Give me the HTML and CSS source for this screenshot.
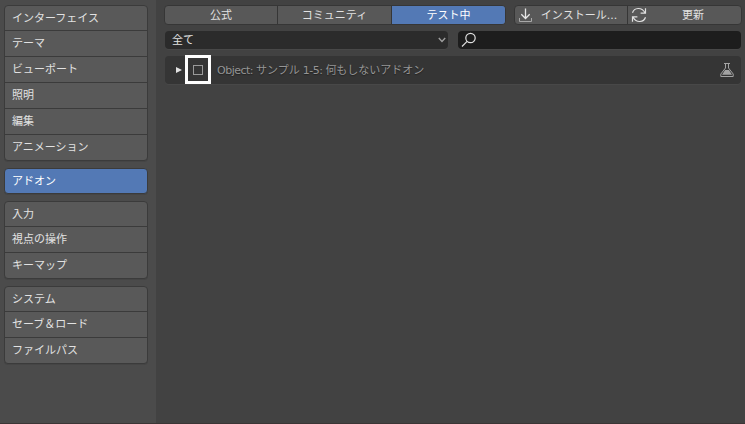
FILE: index.html
```html
<!DOCTYPE html>
<html lang="ja">
<head>
<meta charset="utf-8">
<title>アドオン</title>
<link rel="stylesheet" href="styles.css">
</head>
<body>
<div class="window">
  <nav class="sidebar">
    <div class="group">
      <div class="item">インターフェイス</div>
      <div class="item">テーマ</div>
      <div class="item">ビューポート</div>
      <div class="item">照明</div>
      <div class="item">編集</div>
      <div class="item">アニメーション</div>
    </div>
    <div class="group active">
      <div class="item">アドオン</div>
    </div>
    <div class="group">
      <div class="item">入力</div>
      <div class="item">視点の操作</div>
      <div class="item">キーマップ</div>
    </div>
    <div class="group">
      <div class="item">システム</div>
      <div class="item">セーブ＆ロード</div>
      <div class="item">ファイルパス</div>
    </div>
  </nav>
  <main class="main">
    <div class="toolbar">
      <div class="buttons tabs">
        <div class="button">公式</div>
        <div class="button">コミュニティ</div>
        <div class="button selected">テスト中</div>
      </div>
      <div class="buttons actions">
        <div class="button">
          <svg class="icon" width="16" height="16" viewBox="0 0 16 16" fill="none"><path d="M8.5 1.5V11M4.3 7.3L8.5 11.5L12.7 7.3" stroke="#e6e6e6" stroke-width="1.3"/><path d="M2.5 11V14.5H14.5V11" stroke="#a8a8a8"/></svg>
          <span class="label">インストール...</span>
        </div>
        <div class="button">
          <svg class="icon refresh" width="16" height="16" viewBox="0 0 16 16" fill="none" stroke="#e0e0e0" stroke-width="1.2"><path d="M1.5 5.8C3.2 .6 10.5-.3 13.8 5.5M14.5 1.2V6.2H9.6M14.5 10.2C12.8 15.4 5.5 16.3 2.2 10.5M1.5 14.8V9.8H6.4"/></svg>
          <span class="label">更新</span>
        </div>
      </div>
    </div>
    <div class="filters">
      <div class="select">
        <span>全て</span>
        <svg width="8" height="6" viewBox="0 0 8 6" fill="none" stroke="#a0a0a0" stroke-width="1.4"><path d="M.8 1L4 4.4L7.2 1"/></svg>
      </div>
      <div class="search">
        <svg width="16" height="16" viewBox="0 0 16 16" fill="none" stroke="#dedede" stroke-width="1.2"><circle cx="9.5" cy="6" r="4.7"/><path d="M6.1 9.3L1 14.5"/></svg>
      </div>
    </div>
    <div class="addon">
      <svg class="arrow" width="6" height="6" viewBox="0 0 6 6"><path d="M0 0L6 3L0 6Z" fill="#e2e2e2"/></svg>
      <div class="frame"><div class="checkbox"></div></div>
      <div class="name"><span class="latin">Object: </span>サンプル<span class="latin"> 1-5: </span>何もしないアドオン</div>
      <svg class="flask" width="16" height="16" viewBox="0 0 16 16" fill="none" stroke="#a3a3a3"><path d="M5 1.5H11M6.5 2V6L1.8 12V14.5H14.2V12L9.5 6V2"/><path d="M6 8H10L13 12.8H3Z" fill="#a3a3a3" stroke="none"/></svg>
    </div>
  </main>
</div>
</body>
</html>
```
FILE: styles.css
```css
* {
  box-sizing: border-box;
}

body {
  margin: 0;
  font: 11px/16px "DejaVu Sans", "Noto Sans CJK JP", sans-serif;
  color: #e2e2e2;
  background: #424242;
}

.window {
  display: flex;
  height: 424px;
  overflow: hidden;
  border-bottom: 1px solid #3b3535;
}

.sidebar {
  display: flex;
  flex-direction: column;
  gap: 7px;
  width: 156px;
  padding: 5px 8px 0 4px;
  background: #4b4b4b;
}

.group {
  border: 1px solid #3b3b3b;
  border-radius: 4px;
  background: #595959;
  box-shadow: 0 1px 0 #454545;
}

.item {
  display: flex;
  align-items: center;
  height: 26px;
  padding-left: 7px;
  border-top: 1px solid #3b3b3b;
}

.item:first-child {
  height: 24px;
  padding-top: 2px;
  border-top: 0;
}

.active {
  background: #5379b5;
  color: #fff;
}

.main {
  flex: 1;
  padding: 5px 3px 0 8px;
}

.toolbar {
  display: flex;
  gap: 8px;
}

.buttons {
  display: flex;
  height: 20px;
  border: 1px solid #363636;
  border-radius: 4px;
  background: #585858;
  overflow: hidden;
}

.tabs {
  width: 342px;
}

.actions {
  width: 228px;
}

.button {
  display: flex;
  flex: 1;
  align-items: center;
  justify-content: center;
}

.tabs .button {
  padding-top: 2px;
}

.button:first-child {
  flex: none;
  width: 112px;
}

.button + .button {
  border-left: 1px solid #363636;
}

.selected {
  background: #5379b5;
  color: #fff;
}

.icon {
  flex: none;
  margin-left: 2px;
}

.refresh {
  margin-left: 3px;
}

.label {
  flex: 1;
  padding-top: 2px;
  margin-left: -2px;
  text-align: center;
}

.filters {
  display: flex;
  gap: 10px;
  margin: 6px 1px 0;
}

.select,
.search {
  display: flex;
  align-items: center;
  height: 18px;
  border-radius: 4px;
  box-shadow: 0 1px 0 #484848;
}

.select {
  justify-content: space-between;
  width: 283px;
  padding: 0 2px 0 7px;
  background: #2b2b2b;
}

.select span {
  padding-top: 2px;
}

.search {
  width: 283px;
  padding-left: 3px;
  background: #1d1d1d;
}

.addon {
  display: flex;
  align-items: center;
  height: 28px;
  margin: 7px 1px 0;
  padding: 0 6px 0 11px;
  border-radius: 4px;
  background: #353535;
  box-shadow: 0 1px 0 #484848;
}

.arrow {
  margin: 0 3px 1px 0;
}

.frame {
  display: flex;
  align-items: center;
  justify-content: center;
  width: 26px;
  height: 29px;
  margin-top: -1px;
  border: 3px solid #fff;
}

.checkbox {
  width: 10px;
  height: 10px;
  border: 1px solid #9a9a9a;
}

.name {
  flex: 1;
  margin-left: 6px;
  padding-top: 2px;
  color: #959595;
  text-shadow: 0 1px 1px #222;
}

.latin {
  letter-spacing: -.5px;
}
```
